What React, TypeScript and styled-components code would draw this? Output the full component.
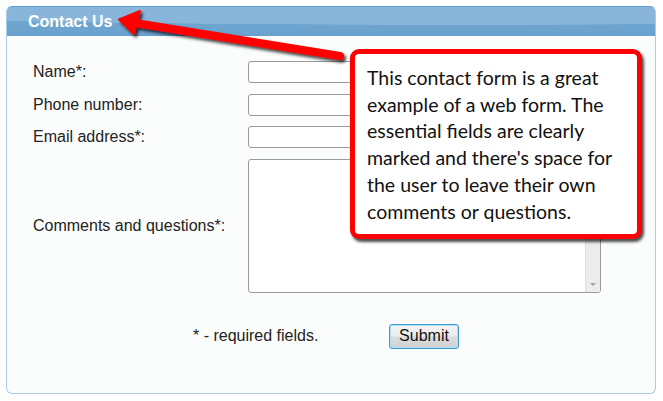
import styled, { createGlobalStyle } from "styled-components";

const GlobalStyle = createGlobalStyle`
  html, body {
    margin: 0;
    padding: 0;
    background: #ffffff;
  }
`;

function App() {
  return (
    <Page>
      <GlobalStyle />
      <Panel>
        <Header>
          <Title>Contact Us</Title>
        </Header>
        <Form>
          <Label>Name*:</Label>
          <Input type="text" />
          <Label>Phone number:</Label>
          <Input type="text" />
          <Label>Email address*:</Label>
          <Input type="text" />
          <Label>Comments and questions*:</Label>
          <TextBox>
            <TextArea />
            <ScrollTrack>
              <DownArrow />
            </ScrollTrack>
          </TextBox>
        </Form>
        <Footer>
          <Required>* - required fields.</Required>
          <SubmitButton type="button">Submit</SubmitButton>
        </Footer>
      </Panel>

      {/* annotation overlay */}
      <Arrow width="663" height="401" viewBox="0 0 663 401">
        <defs>
          <filter id="shadow" x="-10%" y="-50%" width="130%" height="200%">
            <feDropShadow dx="2" dy="2.5" stdDeviation="1.6" floodColor="#000" floodOpacity="0.75" />
          </filter>
        </defs>
        <g filter="url(#shadow)" fill="#ff0000" stroke="#ff0000">
          <line x1="132" y1="22.5" x2="340" y2="56" strokeWidth="8" strokeLinecap="round" />
          <polygon points="119,19.5 140,11 134,34" strokeWidth="2" strokeLinejoin="round" />
        </g>
      </Arrow>
      <Callout>
        This contact form is a great example of a web form. The essential fields are clearly
        marked and there's space for the user to leave their own comments or questions.
      </Callout>
    </Page>
  );
}

export default App;

const Page = styled.div`
  position: relative;
  width: 663px;
  height: 401px;
  padding: 6px 0 0 6px;
  box-sizing: border-box;
  overflow: hidden;
  font-family: "Liberation Sans", Arial, sans-serif;
`;

const Panel = styled.div`
  width: 650px;
  height: 388px;
  box-sizing: border-box;
  border: 1px solid #a9cbe4;
  border-top-color: #5c9fd6;
  border-radius: 6px;
  background: #fbfdfd;
  overflow: hidden;
`;

const Header = styled.div`
  height: 28px;
  display: flex;
  align-items: center;
  padding-left: 21px;
  background:
    radial-gradient(ellipse 1100px 42px at 70% -24px, #88b5d9 0 99%, transparent 100%),
    linear-gradient(#74a9d3, #6aa2ce);
  border-bottom: 1px solid #679fcc;
`;

const Title = styled.h1`
  margin: 0;
  font-size: 16px;
  font-weight: 700;
  color: #ffffff;
  line-height: 1;
  margin-top: 1px;
`;

// form grid
const Form = styled.div`
  display: grid;
  grid-template-columns: 215px 353px;
  grid-template-rows: 22px 22px 22px 134px;
  row-gap: 10.5px;
  align-items: center;
  padding: 25px 0 0 26px;
`;

const Label = styled.label`
  font-size: 16px;
  color: #222222;
`;

const Input = styled.input`
  height: 22px;
  box-sizing: border-box;
  border: 1px solid #9a9a9a;
  border-radius: 3px;
  background: #ffffff;
  margin: 0;
  padding: 0 4px;
`;

const TextBox = styled.div`
  height: 134px;
  box-sizing: border-box;
  display: flex;
  border: 1px solid #9a9a9a;
  border-radius: 3px;
  background: #ffffff;
  overflow: hidden;
`;

const TextArea = styled.textarea`
  flex: 1;
  border: none;
  outline: none;
  resize: none;
  margin: 0;
  padding: 3px;
  background: transparent;
`;

const ScrollTrack = styled.div`
  width: 14px;
  display: flex;
  flex-direction: column;
  justify-content: flex-end;
  align-items: center;
  padding-bottom: 6px;
  background: #ececec;
  border-left: 1px solid #e0e0e0;
`;

const DownArrow = styled.div`
  width: 0;
  height: 0;
  border-left: 3px solid transparent;
  border-right: 3px solid transparent;
  border-top: 3px solid #a3a3a3;
`;

const Footer = styled.div`
  display: flex;
  align-items: center;
  margin-top: 31px;
  padding-left: 186px;
`;

const Required = styled.span`
  width: 196px;
  font-size: 16px;
  color: #222222;
`;

const SubmitButton = styled.button`
  width: 70px;
  height: 25px;
  box-sizing: border-box;
  border: 1px solid #3c9ad3;
  border-radius: 3px;
  box-shadow: inset 0 0 0 1px #b4e0f6;
  background: linear-gradient(#f4f4f4, #ebebeb 48%, #dddddd 52%, #d0d0d0);
  font-family: "Liberation Sans", Arial, sans-serif;
  font-size: 16px;
  color: #111111;
  padding: 0;
  cursor: pointer;
`;

const Arrow = styled.svg`
  position: absolute;
  left: 0;
  top: 0;
  pointer-events: none;
`;

const Callout = styled.div`
  position: absolute;
  left: 350px;
  top: 49px;
  width: 292px;
  height: 190px;
  box-sizing: border-box;
  padding: 11px 14px 0 12px;
  border: 5px solid #ff0000;
  border-radius: 9px;
  background: #ffffff;
  box-shadow: 2px 3px 3px rgba(0, 0, 0, 0.7);
  font-family: Lato, "Open Sans", sans-serif;
  font-size: 19.5px;
  line-height: 26.7px;
  color: #111111;
`;
